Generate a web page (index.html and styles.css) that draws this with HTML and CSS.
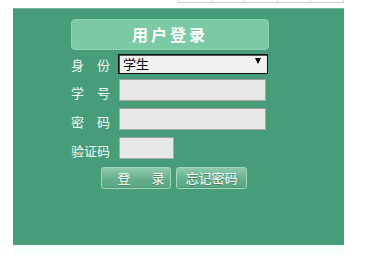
FILE: index.html
```html
<!DOCTYPE html>
<html>
<head>
<meta charset="utf-8">
<link rel="stylesheet" href="styles.css">
</head>
<body>
<div class="topstrip">
  <div class="cell"></div><div class="cell"></div><div class="cell"></div><div class="cell"></div><div class="cell"></div>
</div>
<div class="panel">
  <form class="login">
    <div class="title">用户登录</div>
    <div class="row row-first">
      <label class="lbl">身　份</label>
      <div class="selwrap">
        <select class="sel"><option>学生</option></select>
      </div>
    </div>
    <div class="row">
      <label class="lbl">学　号</label>
      <input class="inp" type="text">
    </div>
    <div class="row">
      <label class="lbl">密　码</label>
      <input class="inp" type="password">
    </div>
    <div class="row">
      <label class="lbl">验证码</label>
      <input class="inp inp-short" type="text">
    </div>
    <div class="btns">
      <button type="button" class="btn btn1">登　录</button>
      <button type="button" class="btn btn2">忘记密码</button>
    </div>
  </form>
</div>
<div class="bottomstrip"></div>
</body>
</html>
```

FILE: styles.css
```css
html, body {
  margin: 0;
  padding: 0;
  background: #ffffff;
  font-family: "Noto Sans CJK SC", "Noto Sans", sans-serif;
}
.topstrip {
  display: flex;
  margin-left: 178px;
  width: 166px;
  height: 2px;
  border-bottom: 1px solid #ccd2d2;
  margin-bottom: 5px;
}
.cell {
  width: 33px;
  height: 2px;
  border-left: 1px solid #d3d8d8;
  box-sizing: border-box;
}
.cell:last-child {
  border-right: 1px solid #d3d8d8;
  width: 34px;
}
.panel {
  margin-left: 13px;
  width: 331px;
  height: 237px;
  box-sizing: border-box;
  background: #479c79;
  border-top: 1px solid #6fb797;
  border-bottom: 1px solid #50a37f;
  padding: 10px 0 0 58px;
}
.bottomstrip {
  margin-left: 13px;
  width: 331px;
  height: 10px;
  background: #f6fffd;
}
.login {
  width: 198px;
  margin: 0;
}
.title {
  height: 31px;
  box-sizing: border-box;
  border: 1px solid #93d3b5;
  border-radius: 4px;
  background: #7cc9a5;
  color: #ffffff;
  text-align: center;
  font-size: 16px;
  line-height: 29px;
  letter-spacing: 3px;
  padding-left: 0;
  font-weight: bold;
}
.row {
  display: flex;
  align-items: flex-start;
  height: 29px;
}
.lbl {
  width: 47px;
  flex: none;
  color: #f2f8f4;
  font-size: 13px;
  line-height: 16px;
  margin-top: 6px;
  white-space: nowrap;
}
.row-first .lbl {
  margin-top: 7px;
}
.selwrap {
  position: relative;
  width: 150px;
  height: 20px;
}
.sel {
  appearance: none;
  -webkit-appearance: none;
  width: 150px;
  height: 20px;
  box-sizing: border-box;
  border: 1px solid #111111;
  box-shadow: inset 1px 1px 0 #555;
  border-radius: 0;
  background: #f1f1f1;
  color: #000;
  font-family: "Noto Sans CJK SC", sans-serif;
  font-size: 13px;
  line-height: 16px;
  padding: 0 0 0 4px;
  margin: 0;
}
.selwrap::after {
  content: "";
  position: absolute;
  right: 7px;
  top: 8px;
  border-left: 3.5px solid transparent;
  border-right: 3.5px solid transparent;
  border-top: 6px solid #000;
}
.inp {
  width: 147px;
  height: 22px;
  box-sizing: border-box;
  margin: 0 0 0 1px;
  padding: 0;
  border: 1px solid #a9aba9;
  border-top-color: #9a9c9a;
  background: #e8e8e8;
  outline: none;
}
.inp-short {
  width: 55px;
}
.btns {
  display: flex;
  gap: 5px;
  margin-left: 30px;
  margin-top: 1px;
}
.btn {
  width: 70px;
  height: 22px;
  box-sizing: border-box;
  border: 1px solid #a6d6be;
  border-radius: 3px;
  background: linear-gradient(#8fcaae, #62ad8b 60%, #5aa684);
  box-shadow: inset 0 -1px 0 #4c9a77;
  color: #ffffff;
  font-family: "Noto Sans CJK SC", sans-serif;
  font-size: 13px;
  line-height: 18px;
  padding: 0;
  text-shadow: 0 1px 0 rgba(40,100,70,0.5);
}
.btn1 {
  letter-spacing: 4px;
  padding-left: 14px;
}
.btn2 {
  width: 71px;
}
```
